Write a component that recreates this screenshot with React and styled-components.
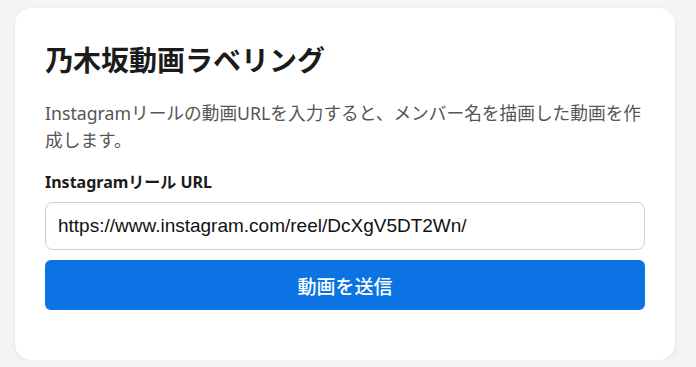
import React from "react"
import styled, { createGlobalStyle } from "styled-components"

const GlobalStyle = createGlobalStyle`
  html, body {
    margin: 0;
    padding: 0;
    background: #f3f4f6;
    font-family: "Noto Sans", "Noto Sans CJK JP", sans-serif;
  }
`;

const Page = styled.div`
  padding: 8px 21px 0 15px;
`;

const Card = styled.div`
  background: #fff;
  border-radius: 16px;
  box-shadow: 0 1px 4px rgba(0, 0, 0, 0.08);
  padding: 30px 30px 50px;
`;

const Title = styled.h1`
  margin: 0 0 20px;
  font-size: 28px;
  font-weight: 700;
  line-height: 42px;
  color: #1b1b1b;
  font-family: "Noto Sans CJK JP", sans-serif;
`;

const Description = styled.p`
  margin: 0 0 15px;
  font-size: 17.7px;
  line-height: 27px;
  color: #555;
`;

const Label = styled.label`
  display: block;
  margin-bottom: 9px;
  font-size: 16px;
  font-weight: 700;
  color: #1b1b1b;
`;

const Input = styled.input`
  display: block;
  box-sizing: border-box;
  width: 100%;
  height: 48px;
  padding: 0 12px;
  border: 1px solid #cfcfcf;
  border-radius: 8px;
  font-family: "Liberation Sans", Arial, sans-serif;
  font-size: 19px;
  color: #111;
  outline: none;
`;

const Button = styled.button`
  display: block;
  width: 100%;
  height: 50px;
  margin-top: 10px;
  border: none;
  border-radius: 6px;
  background: #0b73e3;
  color: #fff;
  font-family: "Noto Sans CJK JP", sans-serif;
  font-size: 19px;
  font-weight: 500;
  cursor: pointer;
`;

export default function App() {
  return (
    <Page>
      <GlobalStyle />
      <Card>
        <Title>乃木坂動画ラベリング</Title>
        <Description>
          Instagramリールの動画URLを入力すると、メンバー名を描画した動画を作成します。
        </Description>
        <Label>Instagramリール URL</Label>
        <Input defaultValue="https://www.instagram.com/reel/DcXgV5DT2Wn/" />
        <Button>動画を送信</Button>
      </Card>
    </Page>
  )
}
